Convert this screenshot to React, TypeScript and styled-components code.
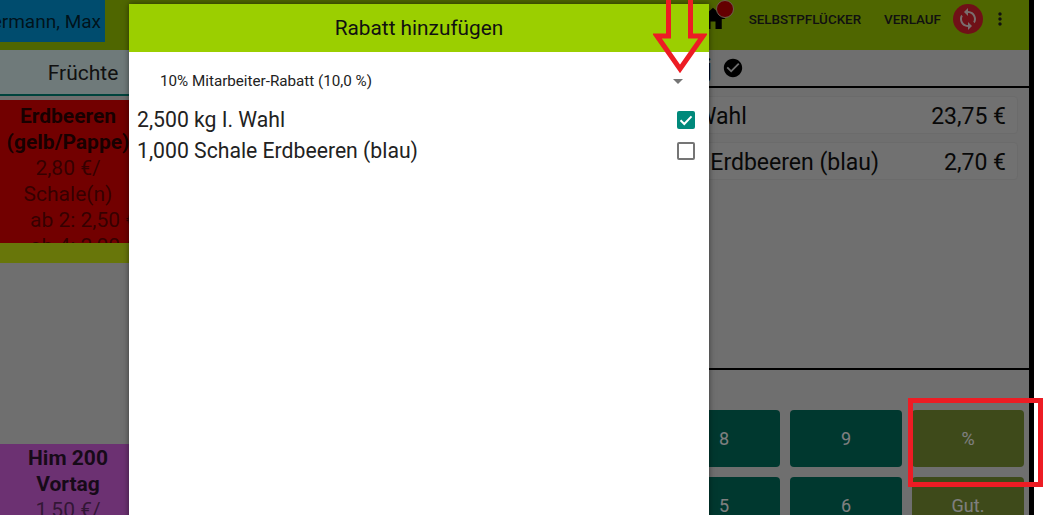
import { createGlobalStyle } from "styled-components";
import styled from "styled-components";
import { MdCheckCircle, MdHome, MdMoreVert, MdSync } from "react-icons/md";

const GlobalStyle = createGlobalStyle`
  html, body {
    margin: 0;
    padding: 0;
    background: #ffffff;
  }
  body {
    font-family: Roboto, "Liberation Sans", sans-serif;
  }
`;

// only the last three columns of the pad are in the picture
const keys = ["8", "9", "%", "5", "6", "Gut."];

const App = () => {
  return (
    <>
      <GlobalStyle />
      <Page>
        <Screen>
          <Header>
            <CustomerTag>Mustermann, Max</CustomerTag>
            <HeaderActions>
              <HomeButton>
                <MdHome size={30} color="#000" />
                <HomeBadge />
              </HomeButton>
              <HeaderLink>Selbstpflücker</HeaderLink>
              <HeaderLink>Verlauf</HeaderLink>
              <SyncButton>
                <MdSync size={24} color="#f4dcdc" />
              </SyncButton>
              <MenuButton>
                <MdMoreVert size={20} color="#222" />
              </MenuButton>
            </HeaderActions>
          </Header>
          <Body>
            <Products>
              <TabBar>
                <Tab>Früchte</Tab>
              </TabBar>
              <ProductCard color="#e40000" height={143} top={3}>
                <ProductName>Erdbeeren (gelb/Pappe)</ProductName>
                <ProductPrice>2,80 €/ Schale(n)</ProductPrice>
                <PriceTier>ab 2: 2,50 €</PriceTier>
                <PriceTier>ab 4: 2,00 €</PriceTier>
              </ProductCard>
              <GroupBand />
              <ProductGap />
              <ProductCard color="#d862e4" height={71} top={1}>
                <ProductName>Him 200 Vortag</ProductName>
                <ProductPrice>1,50 €/</ProductPrice>
              </ProductCard>
            </Products>
            <Receipt>
              <ReceiptTitle>
                <span>j</span>
                <MdCheckCircle size={22} color="#000" />
              </ReceiptTitle>
              <ReceiptList>
                <ReceiptRow>
                  <RowName indent={14}>2,500 kg I. Wahl</RowName>
                  <span>23,75 €</span>
                </ReceiptRow>
                <ReceiptRow>
                  <RowName indent={2}>1,000 Schale Erdbeeren (blau)</RowName>
                  <span>2,70 €</span>
                </ReceiptRow>
              </ReceiptList>
              <Keypad>
                {keys.map((k) => (
                  <Key key={k} accent={k === "%" || k === "Gut."}>
                    {k}
                  </Key>
                ))}
              </Keypad>
            </Receipt>
          </Body>
          <Scrim />
          <Modal>
            <ModalHeader>Rabatt hinzufügen</ModalHeader>
            <DiscountSelect>
              <span>10% Mitarbeiter-Rabatt (10,0 %)</span>
              <Caret />
            </DiscountSelect>
            <ModalRow>
              2,500 kg I. Wahl
              <CheckedBox>
                <svg width="18" height="18" viewBox="0 0 18 18">
                  <path
                    d="M3.5 9.2l3.8 3.8 7.2-7.6"
                    fill="none"
                    stroke="#fff"
                    strokeWidth="2"
                  />
                </svg>
              </CheckedBox>
            </ModalRow>
            <ModalRow>
              1,000 Schale Erdbeeren (blau)
              <EmptyBox />
            </ModalRow>
          </Modal>
        </Screen>
        <ArrowMark width="54" height="76" viewBox="0 0 54 76">
          <path
            d="M15.5 -4V36H4L27 69L50 36H37.5V-4"
            fill="none"
            stroke="#ed1c24"
            strokeWidth="5"
          />
        </ArrowMark>
        <BoxMark />
      </Page>
    </>
  );
};

const Page = styled.div`
  position: relative;
  width: 1062px;
  height: 515px;
  overflow: hidden;
  background: #ffffff;
`;

const Screen = styled.div`
  position: relative;
  width: 1029px;
  height: 515px;
  overflow: hidden;
  background: #dedede;
  border-right: 5px solid #000;
  display: flex;
  flex-direction: column;
`;

const Header = styled.div`
  height: 50px;
  flex: none;
  background: #9fcc00;
  display: flex;
  justify-content: space-between;
  align-items: flex-start;
`;

const CustomerTag = styled.div`
  width: 105px;
  height: 42px;
  background: #0099dd;
  display: flex;
  align-items: center;
  justify-content: flex-end;
  padding-right: 4px;
  box-sizing: border-box;
  font-size: 19px;
  white-space: nowrap;
  color: rgba(0, 0, 0, 0.75);
  overflow: hidden;
`;

const HeaderActions = styled.div`
  display: flex;
  align-items: center;
  height: 38px;
`;

const HomeButton = styled.div`
  position: relative;
  width: 30px;
  height: 30px;
  margin-right: 21px;
`;

const HomeBadge = styled.div`
  position: absolute;
  top: -4px;
  left: 18px;
  width: 18px;
  height: 18px;
  box-sizing: border-box;
  border-radius: 50%;
  background: #c80000;
  border: 1px solid #d8c0a0;
`;

const HeaderLink = styled.div`
  font-size: 13.4px;
  font-weight: 500;
  text-transform: uppercase;
  color: #222;
  margin-right: 23px;

  & + & {
    margin-right: 12px;
  }
`;

const SyncButton = styled.div`
  width: 30px;
  height: 30px;
  border-radius: 50%;
  background: #e0202e;
  display: flex;
  align-items: center;
  justify-content: center;
`;

const MenuButton = styled.div`
  width: 20px;
  margin: 0 19px 0 7px;
  display: flex;
`;

const Body = styled.div`
  flex: 1;
  display: flex;
  justify-content: space-between;
  min-height: 0;
`;

const Products = styled.div`
  width: 136px;
  display: flex;
  flex-direction: column;
`;

const TabBar = styled.div`
  height: 44px;
  margin-bottom: 4px;
  flex: none;
  width: 166px;
  background: #dff5f5;
  border-bottom: 2px solid #00897b;
`;

const Tab = styled.div`
  height: 44px;
  line-height: 46px;
  text-align: center;
  font-size: 21px;
  color: #222;
`;

const ProductCard = styled.div<{ color: string; height: number; top: number }>`
  flex: none;
  box-sizing: border-box;
  height: ${({ height }) => height}px;
  padding-top: ${({ top }) => top}px;
  overflow: hidden;
  background: ${({ color }) => color};
  font-size: 21px;
  line-height: 26px;
  text-align: center;
  color: rgba(0, 0, 0, 0.55);
`;

const ProductName = styled.div`
  font-weight: 700;
  color: rgba(0, 0, 0, 0.8);
`;

const ProductPrice = styled.div``;

const PriceTier = styled.div`
  margin-left: 30px;
  text-align: left;
  white-space: nowrap;
`;

const GroupBand = styled.div`
  height: 20px;
  flex: none;
  background: #d0ec14;
`;

const ProductGap = styled.div`
  height: 181px;
  flex: none;
`;

const Receipt = styled.div`
  width: 460px;
  display: flex;
  flex-direction: column;
`;

const ReceiptTitle = styled.div`
  height: 36px;
  flex: none;
  border-bottom: 2px solid #000;
  display: flex;
  align-items: center;
  justify-content: flex-end;
  gap: 10px;
  padding-right: 285px;
  font-size: 26px;
  color: #000;
`;

const ReceiptList = styled.div`
  flex: 1;
  border-bottom: 2px solid #000;
  padding: 8px 11px 0 2px;
  display: flex;
  flex-direction: column;
  gap: 8px;
`;

const ReceiptRow = styled.div`
  height: 38px;
  flex: none;
  display: flex;
  align-items: center;
  justify-content: space-between;
  box-sizing: border-box;
  padding: 2px 11px 0 0;
  background: #e2e2e2;
  border: 1px solid #d6d6d6;
  border-radius: 4px;
  font-size: 23px;
  color: #111;
`;

const RowName = styled.span<{ indent: number }>`
  margin-left: ${({ indent }) => indent}px;
`;

const Keypad = styled.div`
  flex: none;
  display: grid;
  grid-template-columns: repeat(3, 112px);
  grid-auto-rows: 57px;
  gap: 10px;
  justify-content: end;
  padding: 40px 5px 0 0;
  height: 105px;
`;

const Key = styled.div<{ accent: boolean }>`
  border-radius: 4px;
  background: ${({ accent }) => (accent ? "#7c9434" : "#00705f")};
  color: #ffffff;
  font-size: 18px;
  display: flex;
  align-items: center;
  justify-content: center;
`;

const Scrim = styled.div`
  position: absolute;
  inset: 0;
  background: rgba(0, 0, 0, 0.5);
`;

const Modal = styled.div`
  position: absolute;
  left: 129px;
  top: 4px;
  width: 580px;
  height: 520px;
  background: #ffffff;
  box-shadow: 0 0 6px rgba(0, 0, 0, 0.5);
`;

const ModalHeader = styled.div`
  height: 48px;
  background: #9bcf00;
  display: flex;
  align-items: center;
  justify-content: center;
  font-size: 20.8px;
  color: #111;
`;

const DiscountSelect = styled.div`
  height: 52px;
  display: flex;
  align-items: center;
  justify-content: space-between;
  padding: 6px 26px 0 31px;
  box-sizing: border-box;
  font-size: 15.2px;
  color: #222;
`;

const Caret = styled.div`
  width: 0;
  height: 0;
  border-left: 5px solid transparent;
  border-right: 5px solid transparent;
  border-top: 5px solid #757575;
`;

const ModalRow = styled.div`
  height: 31px;
  display: flex;
  align-items: center;
  justify-content: space-between;
  padding: 0 14px 0 8px;
  font-size: 21.2px;
  color: #222;
`;

const CheckedBox = styled.div`
  width: 18px;
  height: 18px;
  border-radius: 2px;
  background: #00897b;
  display: flex;
`;

const EmptyBox = styled.div`
  width: 18px;
  height: 18px;
  box-sizing: border-box;
  border: 2px solid #757575;
  border-radius: 2px;
`;

const ArrowMark = styled.svg`
  position: absolute;
  left: 653px;
  top: 0;
`;

const BoxMark = styled.div`
  position: absolute;
  left: 908px;
  top: 398px;
  width: 135px;
  height: 89px;
  box-sizing: border-box;
  border: 5px solid #ed1c24;
`;

export default App;
